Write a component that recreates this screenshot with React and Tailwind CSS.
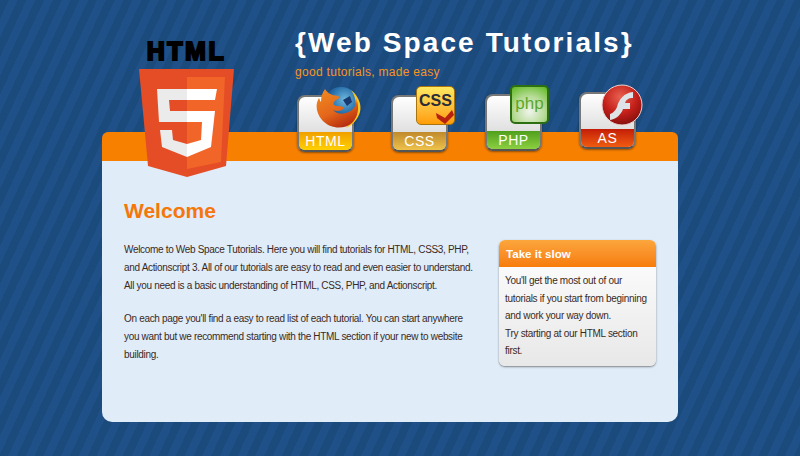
import React from "react";

const font = "[font-family:'Liberation_Sans',Arial,sans-serif]";

function Logo() {
  return (
    <div className="absolute left-[37px] top-[41px] w-[95px]">
      <div className="text-center text-[25px] leading-[20px] font-bold tracking-[2.5px] whitespace-nowrap text-black [-webkit-text-stroke:2px_black]">
        HTML
      </div>
      <svg width="95" height="108" viewBox="139 69 95 108" className="mt-[8px]">
        <path d="M139 69H234L226 166L187 177L148 166Z" fill="#e44d26" />
        <path d="M187 77H225L221 162L187 169Z" fill="#f16529" />
        <path
          d="M157 89H187V100H169L170 111H187V122H159ZM160 130H172L173 140L187 144V157L162 147Z"
          fill="#ebebeb"
        />
        <path
          d="M187 89H217L215 100H187ZM187 111H215L211 147L187 157V144L201 140L202 122H187Z"
          fill="#ffffff"
        />
      </svg>
    </div>
  );
}

function Firefox() {
  return (
    <svg width="46" height="46" viewBox="0 0 46 46">
      <defs>
        <radialGradient id="globe" cx="0.6" cy="0.35" r="0.6">
          <stop offset="0" stopColor="#6fb8dc" />
          <stop offset="0.6" stopColor="#2a72ac" />
          <stop offset="1" stopColor="#1c4080" />
        </radialGradient>
        <linearGradient id="fox" x1="0.1" y1="0" x2="0.6" y2="1">
          <stop offset="0" stopColor="#f08a20" />
          <stop offset="0.6" stopColor="#e4661a" />
          <stop offset="1" stopColor="#b8300f" />
        </linearGradient>
      </defs>
      <circle cx="25" cy="19" r="18" fill="url(#globe)" />
      <path d="M27 14L34 10L36 16L31 20Z" fill="#173a72" />
      <path d="M35 4C42 10 46 18 44 26C42 33 37 39 30 42C36 35 40 28 40 20C40 13 38 8 35 4Z" fill="#ffc81e" />
      <path
        d="M9 3C12 8 16 9 22 10C24 11 23 13 20 14C18 15 17 17 18 19C21 21 25 19 28 22C26 25 21 26 17 24C21 29 31 29 37 23C40 20 41 16 40 12C44 21 42 31 36 37C28 44 14 43 6 34C0 27 -1 18 3 12C4 14 4 15 5 16C5 11 6 7 9 3Z"
        fill="url(#fox)"
      />
    </svg>
  );
}

function Flash() {
  return (
    <svg width="42" height="42" viewBox="0 0 42 42">
      <defs>
        <radialGradient id="ball" cx="0.45" cy="0.3" r="0.75">
          <stop offset="0" stopColor="#e8604f" />
          <stop offset="0.55" stopColor="#c4201a" />
          <stop offset="1" stopColor="#7d0d0c" />
        </radialGradient>
      </defs>
      <circle cx="21" cy="21" r="20" fill="url(#ball)" stroke="#ecd5d2" strokeWidth="1" />
      <path
        d="M32 8V14C27 14 25 16 24 19H29V25H22C20 31 15 35 9 36V30C12 29 15 26 16 23C18 15 23 9 32 8Z"
        fill="#dde3e6"
      />
    </svg>
  );
}

function Tile({ label, bar, children, badge, className }) {
  return (
    <div className={`relative h-[57px] w-[57px] ${className}`}>
      <div className="flex h-full flex-col overflow-hidden rounded-[8px] border-2 border-[#777777] border-b-[#555555] bg-gradient-to-b from-[#ffffff] to-[#d0d0d0] shadow-[0_1px_2px_rgba(0,0,0,0.4)]">
        <div className="flex-1" />
        <div
          className={`flex h-[18px] items-center justify-center text-[14px] leading-none tracking-[0.6px] text-white ${bar}`}
        >
          {label}
        </div>
      </div>
      <div className={badge}>{children}</div>
    </div>
  );
}

export default function App() {
  return (
    <div
      className={`${font} h-[456px] w-[800px] overflow-hidden bg-[#1c4c7f] bg-[repeating-linear-gradient(115deg,#1b4a7c_0px,#1b4a7c_8px,#1f5188_8px,#1f5188_16px)]`}
    >
      <div className="relative ml-[102px] w-[576px]">
        <Logo />
        <header className="flex h-[132px] flex-col pl-[193px] pt-[27px]">
          <h1 className="text-[28px] leading-[32px] font-bold tracking-[2.1px] whitespace-nowrap text-white">
            {"{Web Space Tutorials}"}
          </h1>
          <p className="mt-[5px] text-[12px] leading-[16px] tracking-[0.3px] text-[#f7941d]">
            good tutorials, made easy
          </p>
        </header>

        <nav className="absolute left-[195px] top-[95px] flex items-start gap-[37px]">
          <Tile
            label="HTML"
            bar="bg-gradient-to-b from-[#f0a000] to-[#ffd000]"
            badge="absolute -right-[8px] -top-[9px]"
          >
            <Firefox />
          </Tile>
          <Tile
            label="CSS"
            bar="bg-gradient-to-b from-[#c08a2c] to-[#eec24a]"
            badge="absolute -right-[7px] -top-[9px]"
          >
            <div className="relative h-[39px] w-[39px] overflow-hidden rounded-[5px] border border-[#a87410] bg-gradient-to-b from-[#ffe860] to-[#ff9c00]">
              <span className="absolute left-[2px] top-[6px] text-[16px] leading-[16px] font-bold text-[#2a2c38]">
                CSS
              </span>
              <svg width="18" height="14" viewBox="0 0 18 14" className="absolute bottom-0 right-0">
                <path d="M0 3L9 8L16 0L18 5L9 14L1 8Z" fill="#b8200f" />
              </svg>
            </div>
          </Tile>
          <Tile
            label="PHP"
            bar="bg-gradient-to-b from-[#4f9f1c] to-[#8cd040]"
            badge="absolute -right-[7px] -top-[9px]"
            className="-mt-[1px]"
          >
            <div className="flex h-[39px] w-[39px] items-center justify-center rounded-[5px] border-2 border-[#2e6e12] bg-[radial-gradient(circle_at_50%_70%,#f0f4ec_0%,#b8dc98_50%,#5db81e_100%)] pb-[3px] text-[17px] leading-none text-[#5aa82a]">
              php
            </div>
          </Tile>
          <Tile
            label="AS"
            bar="bg-gradient-to-b from-[#c41a08] to-[#f05a10]"
            badge="absolute -right-[7px] -top-[8px]"
            className="-mt-[3px]"
          >
            <Flash />
          </Tile>
        </nav>

        <div className="h-[29px] rounded-t-[6px] bg-[#f78000]" />

        <main className="flex h-[261px] flex-col rounded-b-[10px] bg-[#e0ecf8] pl-[22px] pr-[22px] pt-[36px]">
          <h2 className="text-[21px] leading-[28px] font-bold text-[#f5760a]">Welcome</h2>
          <div className="mt-[15px] flex justify-between">
            <div className="w-[352px] pt-[1px] text-[10px] leading-[18px] tracking-[-0.32px] text-[#3a2a1e]">
              <p>
                Welcome to Web Space Tutorials. Here you will find tutorials for HTML, CSS3, PHP,
                and Actionscript 3. All of our tutorials are easy to read and even easier to
                understand. All you need is a basic understanding of HTML, CSS, PHP, and
                Actionscript.
              </p>
              <p className="mt-[15px]">
                On each page you'll find a easy to read list of each tutorial. You can start
                anywhere you want but we recommend starting with the HTML section if your new to
                website building.
              </p>
            </div>
            <aside className="h-[126px] w-[157px] overflow-hidden rounded-[6px] bg-gradient-to-b from-[#ffffff] to-[#e8e8e8] shadow-[0_1px_2px_rgba(60,60,60,0.6)]">
              <h3 className="flex h-[27px] items-center bg-gradient-to-b from-[#fba63c] to-[#f77b06] pl-[7px] text-[11.6px] font-bold text-white">
                Take it slow
              </h3>
              <p className="px-[6px] pt-[5px] text-[10px] leading-[17.5px] tracking-[-0.3px] text-[#3a2a1e]">
                You'll get the most out of our tutorials if you start from beginning and work your
                way down.
                <br />
                Try starting at our HTML section first.
              </p>
            </aside>
          </div>
        </main>
      </div>
    </div>
  );
}
